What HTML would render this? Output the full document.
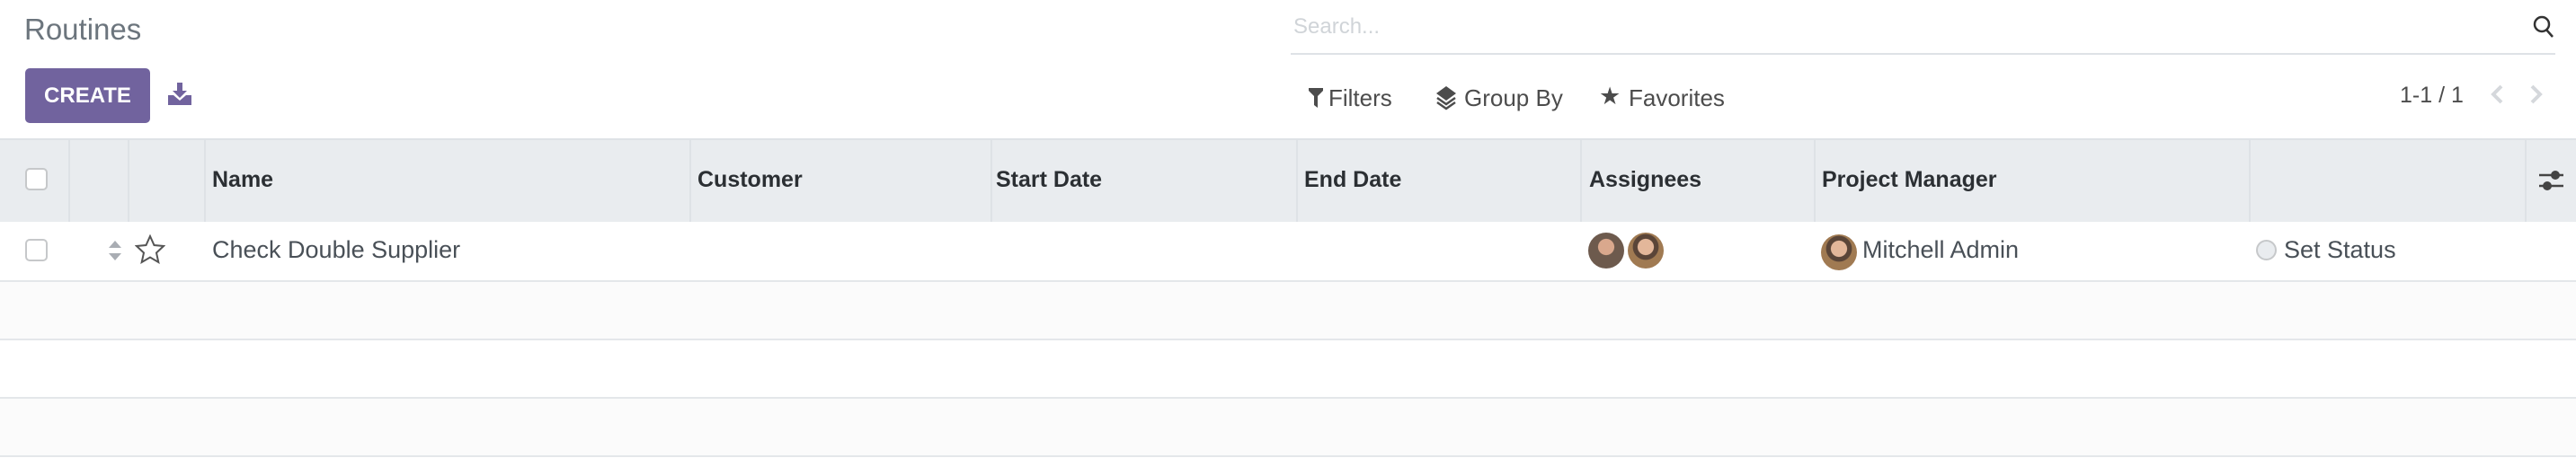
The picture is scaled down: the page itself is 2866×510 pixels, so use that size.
<!DOCTYPE html>
<html><head><meta charset="utf-8"><style>
*{margin:0;padding:0;box-sizing:border-box}
body{width:2866px;height:510px;background:#fff;font-family:"Liberation Sans",sans-serif;position:relative;overflow:hidden;color:#4c4c4c}
.a{position:absolute}
.hd{font-weight:bold;color:#2b2f33;font-size:25px;top:186px}
.vl{position:absolute;top:156px;height:91px;width:2px;background:#dee2e6}
.hl{position:absolute;left:0;width:2866px;height:2px;background:#e4e7ea}
.cb{position:absolute;width:25px;height:25px;border:2px solid #c6c8ca;border-radius:5px;background:#fff}
.av{position:absolute;width:40px;height:40px;border-radius:50%;background:radial-gradient(circle at 50% 40%,#e3b79a 0 28%,#5a4538 30% 45%,#a07a52 47%)}
</style></head><body>
<div class="a" style="left:27px;top:14px;font-size:33px;color:#6c757d">Routines</div>
<div class="a" style="left:28px;top:76px;width:139px;height:61px;background:#71639e;border-radius:5px;color:#fff;font-weight:bold;font-size:24px;line-height:61px;text-align:center">CREATE</div>
<svg class="a" style="left:187px;top:92px" width="26" height="25" viewBox="0 0 26 25"><path d="M10 0h6v9h5l-8 8-8-8h5z" fill="#71639e"/><path d="M0 14h6l7 6 7-6h6v11H0z" fill="#71639e"/></svg>
<div class="a" style="left:1439px;top:16px;font-size:24px;color:#d0d4d8">Search...</div>
<svg class="a" style="left:2818px;top:17px" width="24" height="26" viewBox="0 0 24 26"><circle cx="10" cy="10" r="8" fill="none" stroke="#333" stroke-width="2.5"/><path d="M15 16l7 8" stroke="#333" stroke-width="2.5"/></svg>
<div class="a" style="left:1436px;top:59px;width:1407px;height:2px;background:#dee2e6"></div>
<svg class="a" style="left:1456px;top:98px" width="16" height="22" viewBox="0 0 16 22"><path d="M0 0h16v3l-6 6v13l-4-3V9L0 3z" fill="#4c4c4c"/></svg>
<div class="a" style="left:1478px;top:94px;font-size:26px">Filters</div>
<svg class="a" style="left:1597px;top:96px" width="24" height="27" viewBox="0 0 24 27"><path d="M12 0l11 8-11 8L1 8z" fill="#4c4c4c"/><path d="M2 13l10 7 10-7M2 18l10 7 10-7" fill="none" stroke="#4c4c4c" stroke-width="2.5"/></svg>
<div class="a" style="left:1629px;top:94px;font-size:26px">Group By</div>
<div class="a" style="left:1779px;top:92px;font-size:27px">★</div>
<div class="a" style="left:1812px;top:94px;font-size:26px">Favorites</div>
<div class="a" style="left:2670px;top:92px;font-size:25px">1-1 / 1</div>
<svg class="a" style="left:2769px;top:94px" width="62" height="22" viewBox="0 0 62 22"><path d="M14 2l-9 9 9 9M48 2l9 9-9 9" fill="none" stroke="#d5d8dc" stroke-width="4"/></svg>
<div class="a" style="left:0;top:154px;width:2866px;height:93px;background:#e9ecef;border-top:2px solid #dee2e6"></div>
<div class="vl" style="left:76px"></div><div class="vl" style="left:142px"></div><div class="vl" style="left:227px"></div><div class="vl" style="left:767px"></div><div class="vl" style="left:1102px"></div><div class="vl" style="left:1442px"></div><div class="vl" style="left:1758px"></div><div class="vl" style="left:2018px"></div><div class="vl" style="left:2502px"></div><div class="vl" style="left:2809px"></div>
<div class="cb" style="left:28px;top:187px"></div>
<div class="a hd" style="left:236px">Name</div>
<div class="a hd" style="left:776px">Customer</div>
<div class="a hd" style="left:1108px">Start Date</div>
<div class="a hd" style="left:1451px">End Date</div>
<div class="a hd" style="left:1768px">Assignees</div>
<div class="a hd" style="left:2027px">Project Manager</div>
<svg class="a" style="left:2825px;top:189px" width="27" height="24" viewBox="0 0 27 24"><path d="M0 6h27M0 18h27" stroke="#444" stroke-width="2.5"/><circle cx="18" cy="6" r="5" fill="#444"/><circle cx="9" cy="18" r="5" fill="#444"/></svg>
<div class="a" style="left:0;top:313px;width:2866px;height:65px;background:#fbfbfb"></div>
<div class="a" style="left:0;top:443px;width:2866px;height:65px;background:#fbfbfb"></div>
<div class="hl" style="top:312px"></div><div class="hl" style="top:377px"></div><div class="hl" style="top:442px"></div><div class="hl" style="top:507px"></div>
<div class="cb" style="left:28px;top:266px"></div>
<svg class="a" style="left:120px;top:268px" width="16" height="22" viewBox="0 0 16 22"><path d="M8 0l7 8H1zM8 22l7-8H1z" fill="#a9adb3"/></svg>
<svg class="a" style="left:150px;top:261px" width="34" height="33" viewBox="0 0 34 33"><path d="M17 2l4.5 10 10.5 1-8 7.5 2.3 10.5L17 25.5 7.7 31 10 20.5 2 13l10.5-1z" fill="none" stroke="#555" stroke-width="2"/></svg>
<div class="a" style="left:236px;top:263px;font-size:27px;color:#495057">Check Double Supplier</div>
<div class="av" style="left:1767px;top:259px;background:radial-gradient(circle at 50% 40%,#d9a88d 0 28%,#6d5a4d 30%)"></div>
<div class="av" style="left:1811px;top:259px"></div>
<div class="av" style="left:2026px;top:261px"></div>
<div class="a" style="left:2072px;top:263px;font-size:27px;color:#495057">Mitchell Admin</div>
<div class="a" style="left:2510px;top:267px;width:23px;height:23px;border-radius:50%;border:2px solid #c6c8ca;background:#e9ecef"></div>
<div class="a" style="left:2541px;top:263px;font-size:27px;color:#495057">Set Status</div>
</body></html>
